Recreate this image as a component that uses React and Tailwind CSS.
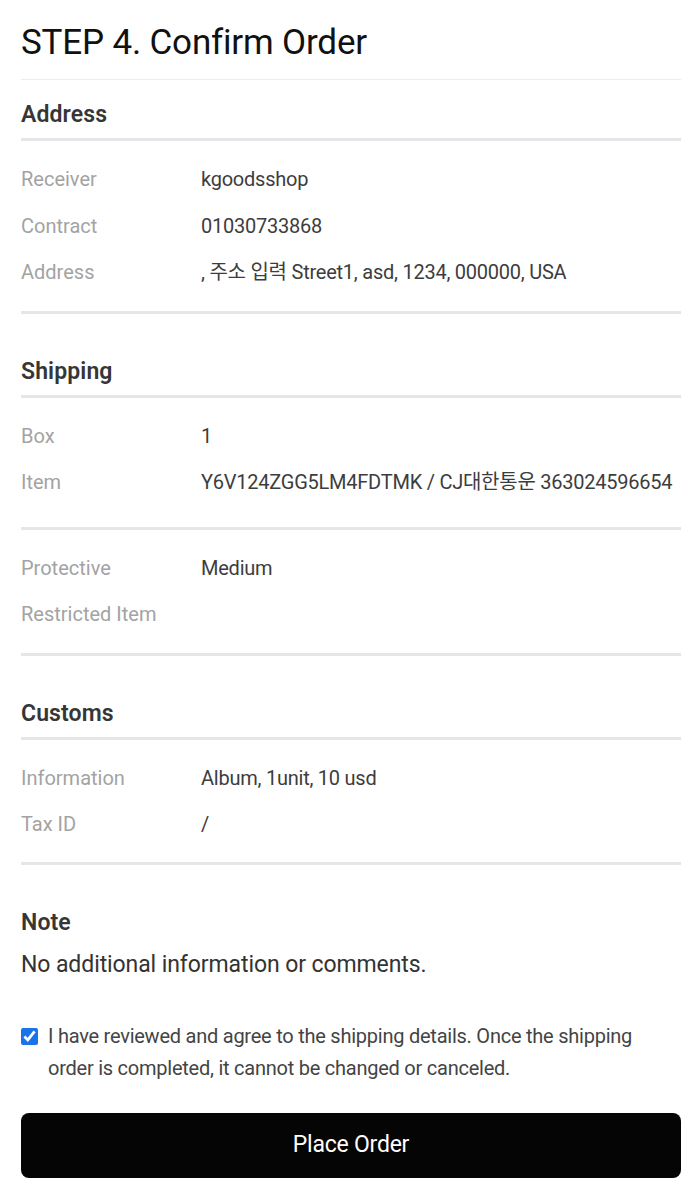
import React, { useState } from "react";

const font = { fontFamily: "Roboto, 'Noto Sans CJK KR', sans-serif" };

function Row({ label, value }) {
  return (
    <div className="flex items-center h-[46.5px] text-[20px]">
      <div className="w-[180px] text-[#a3a3a3]">{label}</div>
      <div className="text-[#3d3d3d] tracking-[-0.012em]">{value}</div>
    </div>
  );
}

function Group({ rows, pb = "pb-[15px]" }) {
  return (
    <div className={`pt-[15px] ${pb} border-b-[3px] border-[#e6e6ea]`}>
      {rows.map((r) => (
        <Row key={r[0]} label={r[0]} value={r[1]} />
      ))}
    </div>
  );
}

function Heading({ children, border = true }) {
  return (
    <div className={`pt-[20px] pb-[8px] ${border ? "border-b-[3px] border-[#e6e6ea]" : ""}`}>
      <h2 className="text-[23px] leading-[30px] font-semibold text-[#363636] tracking-[0.005em]">{children}</h2>
    </div>
  );
}

export default function App() {
  const [agree, setAgree] = useState(true);

  return (
    <div className="bg-white min-h-screen pl-[21px] pr-[19px]" style={font}>
      <div className="h-[80px] flex items-center border-b border-[#ececec]">
        <h1 className="text-[35px] text-[#111] tracking-[-0.005em] pt-[7px]">STEP 4. Confirm Order</h1>
      </div>

      {/* Address */}
      <Heading>Address</Heading>
      <Group
        rows={[
          ["Receiver", "kgoodsshop"],
          ["Contract", "01030733868"],
          ["Address", ", 주소 입력 Street1, asd, 1234, 000000, USA"],
        ]}
      />

      {/* Shipping */}
      <div className="mt-[23px]">
        <Heading>Shipping</Heading>
        <Group
          pb="pb-[21px]"
          rows={[
            ["Box", "1"],
            ["Item", "Y6V124ZGG5LM4FDTMK / CJ대한통운 363024596654"],
          ]}
        />
        <Group
          rows={[
            ["Protective", "Medium"],
            ["Restricted Item", ""],
          ]}
        />
      </div>

      {/* Customs */}
      <div className="mt-[23px]">
        <Heading>Customs</Heading>
        <Group
          pb="pb-[14px]"
          rows={[
            ["Information", "Album, 1unit, 10 usd"],
            ["Tax ID", "/"],
          ]}
        />
      </div>

      {/* Note */}
      <div className="mt-[23px]">
        <Heading border={false}>Note</Heading>
        <p className="mt-[3px] text-[23px] leading-[32px] text-[#333] tracking-[-0.004em]">
          No additional information or comments.
        </p>
      </div>

      <label className="mt-[39px] flex items-start gap-[10px] text-[20px] leading-[32px] text-[#444] tracking-[-0.012em]">
        <input
          type="checkbox"
          checked={agree}
          onChange={(e) => setAgree(e.target.checked)}
          className="mt-[8px] w-[17px] h-[17px] accent-[#1a73e8] shrink-0"
        />
        <span>
          I have reviewed and agree to the shipping details. Once the shipping order is completed, it cannot be changed or canceled.
        </span>
      </label>

      <button className="mt-[29px] w-full h-[65px] rounded-[8px] bg-[#050505] text-white text-[23px] tracking-[-0.01em]">
        Place Order
      </button>
    </div>
  );
}
